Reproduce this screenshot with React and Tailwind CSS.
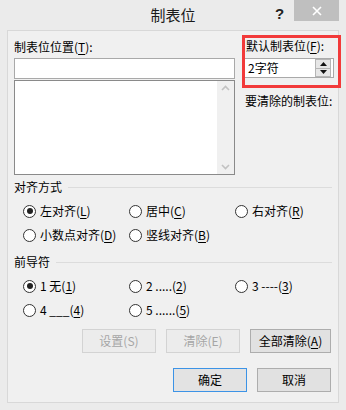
import React from "react";

const font = { fontFamily: '"Noto Sans CJK SC", "Noto Sans", sans-serif' };

function U({ children }) {
  return <span className="underline underline-offset-2">{children}</span>;
}

function Radio({ checked, children }) {
  return (
    <div className="flex items-center h-[24px]">
      <span className="w-[13px] h-[13px] rounded-full border border-[#333] bg-white flex items-center justify-center shrink-0">
        {checked && <span className="w-[6px] h-[6px] rounded-full bg-[#222]" />}
      </span>
      <span className="ml-[4px] text-[12px] leading-[16px] text-black whitespace-nowrap">{children}</span>
    </div>
  );
}

function Btn({ children, disabled, primary, w = "w-[74px]" }) {
  return (
    <div
      className={`${w} h-[24px] flex items-center justify-center text-[12px] border ${
        disabled
          ? "border-[#d3d3d3] bg-[#ececec] text-[#a6a6a6]"
          : primary
          ? "border-[#3c93e6] bg-[#e3e3e3] text-black"
          : "border-[#adadad] bg-[#e1e1e1] text-black"
      }`}
    >
      {children}
    </div>
  );
}

function GroupLabel({ children }) {
  return (
    <div className="flex items-center h-[16px] pl-[6px] pr-[6px]">
      <span className="text-[12px] leading-[16px] text-black whitespace-nowrap">{children}</span>
      <div className="flex-1 ml-[6px] h-px bg-[#dcdcdc]" />
    </div>
  );
}

export default function App() {
  return (
    <div className="w-[346px] h-[410px] bg-[#ebebeb] relative overflow-hidden" style={font}>
      {/* Title bar */}
      <div className="relative h-[30px] flex items-center justify-center">
        <span className="text-[15px] text-[#1a1a1a] leading-[20px] -mt-[1px]">制表位</span>
        <span className="absolute left-[275px] top-[3px] text-[15px] font-bold text-[#222]" style={{ fontFamily: '"Liberation Sans", sans-serif' }}>?</span>
        <div className="absolute left-[294px] top-0 w-[45px] h-[21px] bg-[#bfbfbf] flex items-center justify-center">
          <svg width="10" height="10" viewBox="0 0 10 10">
            <path d="M1 1 L9 9 M9 1 L1 9" stroke="white" strokeWidth="1.6" />
          </svg>
        </div>
      </div>

      {/* Panel */}
      <div className="mx-[7px] w-[332px] h-[373px] border border-[#d8d8d8] bg-[#f0f0f0] flex flex-col">
        {/* top section */}
        <div className="flex h-[144px]">
          <div className="ml-[6px] w-[221px] flex flex-col">
            <div className="mt-[8px] h-[16px] text-[12px] leading-[16px] text-black">
              制表位位置(<U>T</U>):
            </div>
            <div className="mt-[3px] h-[21px] border border-[#a9a9a9] bg-white" />
            <div className="mt-[1px] h-[95px] border border-[#8a8a8a] bg-white flex justify-end">
              <div className="w-[17px] h-full bg-[#f0f0f0] flex flex-col items-center justify-between py-[4px]">
                <svg width="9" height="6" viewBox="0 0 9 6">
                  <path d="M1 5 L4.5 1.5 L8 5" stroke="#c2c2c2" strokeWidth="1.6" fill="none" />
                </svg>
                <svg width="9" height="6" viewBox="0 0 9 6">
                  <path d="M1 1 L4.5 4.5 L8 1" stroke="#c2c2c2" strokeWidth="1.6" fill="none" />
                </svg>
              </div>
            </div>
          </div>
          <div className="ml-[9px] w-[90px] flex flex-col">
            <div className="mt-[7px] h-[16px] pl-[2px] text-[12px] leading-[16px] text-black whitespace-nowrap">
              默认制表位(<U>F</U>):
            </div>
            <div className="mt-[4px] h-[20px] border border-[#a9a9a9] bg-white flex items-center">
              <span className="pl-[3px] flex-1 text-[12px] leading-[16px] text-black">2字符</span>
              <div className="w-[16px] h-full flex flex-col mr-[2px]">
                <div className="flex-1 border border-[#b5b5b5] bg-[#e6e6e6] flex items-center justify-center">
                  <svg width="7" height="4" viewBox="0 0 7 4"><path d="M0 4 L3.5 0 L7 4 Z" fill="#111" /></svg>
                </div>
                <div className="flex-1 border border-t-0 border-[#b5b5b5] bg-[#e6e6e6] flex items-center justify-center">
                  <svg width="7" height="4" viewBox="0 0 7 4"><path d="M0 0 L3.5 4 L7 0 Z" fill="#111" /></svg>
                </div>
              </div>
            </div>
            <div className="mt-[15px] h-[16px] pl-[1px] text-[12px] leading-[16px] text-black whitespace-nowrap">
              要清除的制表位:
            </div>
          </div>
        </div>

        {/* 对齐方式 */}
        <div className="mt-[4px]">
          <GroupLabel>对齐方式</GroupLabel>
        </div>
        <div className="mt-[4px] pl-[15px] grid grid-cols-[106px_106px_106px]">
          <Radio checked>左对齐(<U>L</U>)</Radio>
          <Radio>居中(<U>C</U>)</Radio>
          <Radio>右对齐(<U>R</U>)</Radio>
          <Radio>小数点对齐(<U>D</U>)</Radio>
          <Radio>竖线对齐(<U>B</U>)</Radio>
        </div>

        {/* 前导符 */}
        <div className="mt-[7px]">
          <GroupLabel>前导符</GroupLabel>
        </div>
        <div className="mt-[4px] pl-[15px] grid grid-cols-[106px_106px_106px]">
          <Radio checked>1 无(<U>1</U>)</Radio>
          <Radio>2 .....(<U>2</U>)</Radio>
          <Radio>3 ----(<U>3</U>)</Radio>
          <Radio>4 ___(<U>4</U>)</Radio>
          <Radio>5 ......(<U>5</U>)</Radio>
        </div>

        {/* buttons */}
        <div className="mt-[7px] flex justify-end gap-[10px] pr-[7px]">
          <Btn disabled>设置(S)</Btn>
          <Btn disabled>清除(E)</Btn>
          <Btn w="w-[81px]">全部清除(<U>A</U>)</Btn>
        </div>
        <div className="mt-[15px] flex justify-end gap-[10px] pr-[7px]">
          <Btn primary>确定</Btn>
          <Btn>取消</Btn>
        </div>
      </div>

      {/* red highlight annotation */}
      <div className="absolute left-[242px] top-[35px] w-[99px] h-[53px] border-[3px] border-[#f23a3a] pointer-events-none" />
    </div>
  );
}
